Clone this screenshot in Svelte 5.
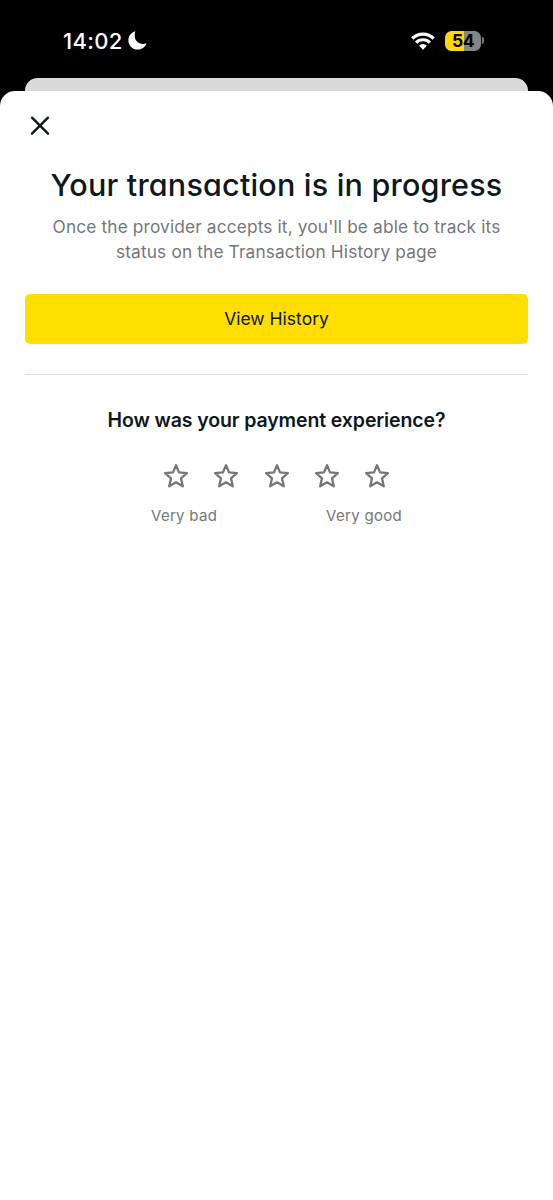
<script lang="ts">
  const stars = [1, 2, 3, 4, 5];
  let rating = $state(0);
</script>

<div class="screen">
  <header class="status">
    <div class="clock">
      <span class="time">14:02</span>
      <svg class="moon" width="19" height="19" viewBox="0 0 19 19" aria-hidden="true">
        <path d="M7 .3C2.8 1.800.4 5.300.4 9.4c0 5.1 4 9.1 9.2 9.1 4 0 7.500-2.300 9-6.300-1.200.5-2.300.700-3.600.700-5.200 0-8.300-3.200-8.300-8.300 0-1.500.1-2.900.6-4.300Z" fill="#fff" />
      </svg>
    </div>
    <div class="system">
      <svg class="wifi" width="24" height="18" viewBox="0 0 24 18" aria-hidden="true">
        <g fill="none" stroke="#fff" stroke-width="3.2">
          <path d="M1.3 6.5A15.2 15.2 0 0 1 22.7 6.5" />
          <path d="M5.1 10.6A9.8 9.8 0 0 1 18.9 10.6" />
        </g>
        <path d="M8.1 13.7A5.6 5.6 0 0 1 15.9 13.7L12 17.7Z" fill="#fff" />
      </svg>
      <div class="battery">54</div>
      <span class="tip"></span>
    </div>
  </header>

  <div class="behind"></div>

  <main class="sheet">
    <button type="button" class="close" aria-label="Close">
      <svg width="20" height="20" viewBox="0 0 20 20">
        <path d="M2 1.7L18 17.7M18 1.7L2 17.7" fill="none" stroke="#0f181b" stroke-width="2.4" stroke-linecap="round" />
      </svg>
    </button>

    <h1>Your transaction is in progress</h1>
    <p class="lead">
      Once the provider accepts it, you'll be able to track its<br />
      status on the Transaction History page
    </p>

    <button type="button" class="history">View History</button>
    <hr />

    <h2>How was your payment experience?</h2>
    <div class="stars">
      {#each stars as n (n)}
        <button type="button" class="star" aria-label="{n} of 5" onclick={() => (rating = n)}>
          <svg width="28" height="28" viewBox="0 0 28 28">
            <path
              d="M14 3.2L17 10.4L24.9 11.1L19 16.3L20.8 24.3L14 20.3L7.2 24.3L9 16.3L3.1 11.1L11 10.4Z"
              fill={n <= rating ? "#ffde00" : "none"}
              stroke="#757779"
              stroke-width="2.3"
              stroke-linejoin="round"
            />
          </svg>
        </button>
      {/each}
    </div>
    <div class="scale">
      <span>Very bad</span>
      <span>Very good</span>
    </div>
  </main>
</div>

<style>
  :global(body) {
    margin: 0;
    background: #000;
  }
  .screen {
    display: flex;
    flex-direction: column;
    width: 553px;
    height: 1200px;
    overflow: hidden;
    background: #000;
    font-family: Inter, "Liberation Sans", sans-serif;
  }
  button {
    appearance: none;
    padding: 0;
    border: 0;
    background: none;
    font-family: inherit;
    cursor: pointer;
  }
  svg {
    display: block;
  }
  .status {
    display: flex;
    align-items: flex-start;
    justify-content: space-between;
    flex: none;
    box-sizing: border-box;
    height: 78px;
    padding: 3px 69px 0 63px;
  }
  .clock,
  .system {
    display: flex;
    align-items: center;
    height: 75px;
    color: #fff;
  }
  .time {
    font-size: 22px;
    font-weight: 500;
    line-height: 28px;
    letter-spacing: 0.35px;
  }
  .moon {
    margin-left: 5px;
  }
  .wifi {
    margin-right: 10px;
  }
  .battery {
    width: 36px;
    height: 20px;
    border-radius: 6.5px;
    background: linear-gradient(90deg, #ffd60a 54%, #858585 54%);
    color: #000;
    font-size: 17.5px;
    font-weight: 700;
    line-height: 20px;
    letter-spacing: -0.6px;
    text-align: center;
  }
  .tip {
    width: 2px;
    height: 7px;
    margin-left: 1px;
    border-radius: 0 2px 2px 0;
    background: #777;
  }
  .behind {
    flex: none;
    height: 12.5px;
    margin: 0 25.5px 0 25px;
    border-radius: 12.5px 12.5px 0 0;
    background: #dadada;
  }
  .sheet {
    display: flex;
    flex-direction: column;
    flex: 1;
    padding: 25px 25px 0;
    border-radius: 15px 15px 0 0;
    background: #fff;
    color: #0f181b;
    text-align: center;
  }
  .close {
    align-self: flex-start;
    margin-left: 5px;
  }
  /* cv11 is Inter's single-storey a */
  h1 {
    margin: 29px 0 0;
    font-size: 30.5px;
    font-weight: 500;
    font-feature-settings: "cv11";
    line-height: 40px;
    letter-spacing: 0.2px;
    white-space: nowrap;
  }
  .lead {
    margin: 9px 0 0;
    color: #757779;
    font-size: 17.3px;
    line-height: 25px;
    letter-spacing: 0.14px;
    white-space: nowrap;
  }
  .history {
    flex: none;
    height: 50.5px;
    margin-top: 30px;
    border-radius: 5px;
    background: #ffde00;
    color: #0f181b;
    font-size: 17.5px;
  }
  hr {
    width: 100%;
    height: 1px;
    margin: 30px 0 0;
    border: 0;
    background: #dedede;
  }
  h2 {
    margin: 31px 0 0;
    font-size: 19.5px;
    font-weight: 600;
    line-height: 28px;
    letter-spacing: -0.11px;
    white-space: nowrap;
  }
  .stars {
    display: flex;
    justify-content: center;
    gap: 22.3px;
    margin-top: 28px;
  }
  .scale {
    display: flex;
    justify-content: space-between;
    margin: 16px 126px 0;
    color: #757779;
    font-size: 15px;
    line-height: 20px;
    letter-spacing: 0.3px;
    white-space: nowrap;
  }
</style>
